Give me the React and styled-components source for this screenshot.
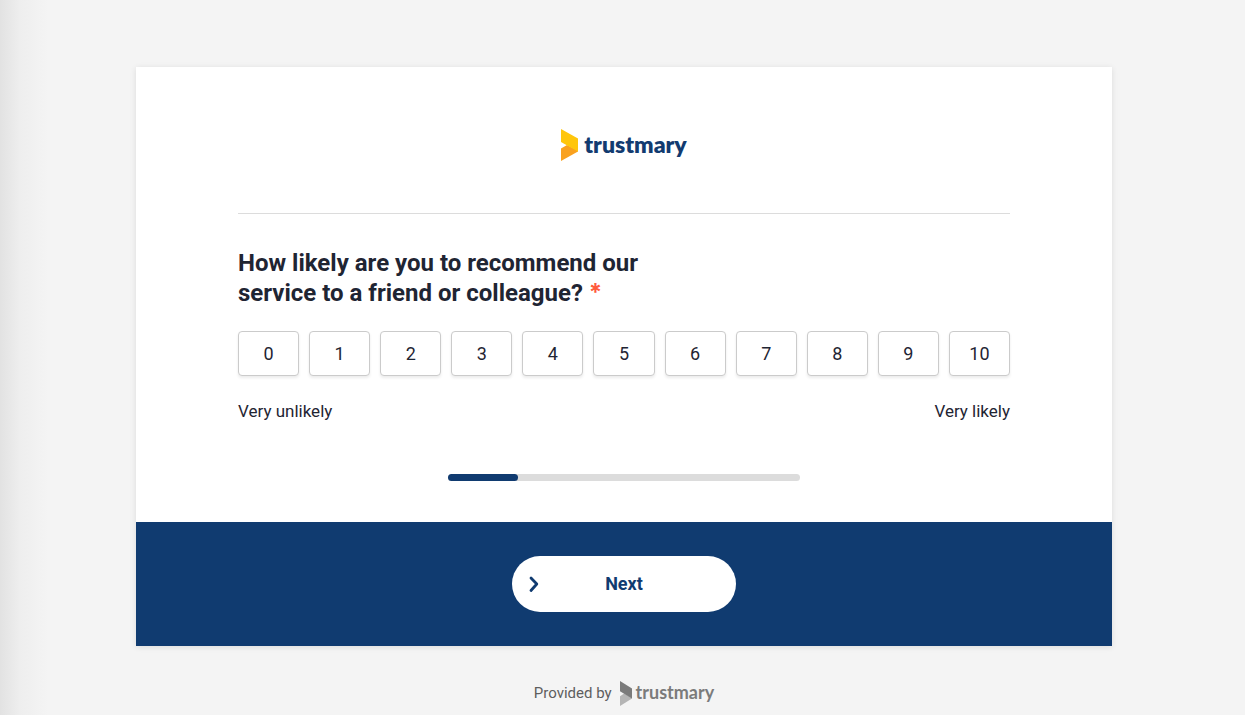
import React, { useState } from "react";
import styled, { createGlobalStyle } from "styled-components";

const GlobalStyle = createGlobalStyle`
  *, *::before, *::after { box-sizing: border-box; }
  body {
    margin: 0;
    background: #f4f4f4 linear-gradient(to right, #e2e2e2, #eeeeee 20px, #f4f4f4 48px);
    color: #1f2533;
    font-family: Roboto, "Liberation Sans", sans-serif;
  }
`;

const Page = styled.div`
  min-height: 100vh;
  padding: 67px 133px 0 136px;
`;

const Card = styled.form`
  background: #fff;
  box-shadow: 0 1px 6px rgba(0, 0, 0, 0.1);
`;

const Body = styled.div`
  padding: 60px 102px 41px;
`;

const LogoHeader = styled.header`
  display: flex;
  justify-content: center;
  padding-bottom: 50px;
  border-bottom: 1px solid #dcdcdc;
`;

const Brand = styled.span`
  display: inline-flex;
  align-items: center;
  gap: ${({ $small }) => ($small ? 4 : 6)}px;
  color: ${({ $small }) => ($small ? "#7b7b7b" : "#123b70")};
  font-family: Lato, sans-serif;
  font-size: ${({ $small }) => ($small ? 18 : 23)}px;
  font-weight: ${({ $small }) => ($small ? 700 : 800)};
  line-height: ${({ $small }) => ($small ? 26 : 34)}px;
`;

const BrandName = styled.span`
  padding-bottom: 2px;
`;

const Question = styled.fieldset`
  min-width: 0;
  margin: 0;
  padding: 34px 0 0;
  border: 0;
`;

const Title = styled.legend`
  float: left;
  width: 100%;
  max-width: 420px;
  margin-bottom: 23px;
  padding: 0;
  font-size: 24px;
  font-weight: 700;
  line-height: 30px;
`;

const Required = styled.span`
  color: #ff5a3d;
  font-family: Inter, sans-serif;
  line-height: 24px;
`;

const Scale = styled.div`
  clear: both;
  display: flex;
  gap: 10px;
`;

const Score = styled.label`
  flex: 1 1 0;
  display: flex;
  align-items: center;
  justify-content: center;
  height: 45px;
  border: 1px solid #cbcbcb;
  border-radius: 4px;
  background: #fff;
  box-shadow: 0 2px 3px rgba(0, 0, 0, 0.08);
  font-size: 18px;
  cursor: pointer;

  &:has(input:checked) {
    border-color: #103b70;
    background: #e8eef6;
  }

  &:focus-within {
    outline: 2px solid #103b70;
  }
`;

const ScoreInput = styled.input`
  appearance: none;
  width: 0;
  height: 0;
  margin: 0;
  outline: 0;
`;

const Ends = styled.div`
  display: flex;
  justify-content: space-between;
  margin-top: 22px;
  font-size: 17px;
  line-height: 26px;
`;

const Progress = styled.div`
  width: 100%;
  max-width: 352px;
  height: 7px;
  margin: 50px auto 0;
  border-radius: 4px;
  background: #dcdcdc;
`;

const ProgressFill = styled.div`
  height: 100%;
  border-radius: 4px;
  background: #103b70;
`;

const Actions = styled.footer`
  display: flex;
  justify-content: center;
  padding: 34px 0;
  background: #103b70;
`;

const NextButton = styled.button`
  display: grid;
  grid-template-columns: 20px 1fr 20px;
  align-items: center;
  width: 224px;
  height: 56px;
  padding: 0 12px;
  border: 0;
  border-radius: 28px;
  background: #fff;
  color: #103b70;
  font: 700 18px/24px Roboto, "Liberation Sans", sans-serif;
  cursor: pointer;
`;

const Provided = styled.div`
  display: flex;
  align-items: center;
  justify-content: center;
  gap: 8px;
  padding-top: 33px;
  color: #5e5e5e;
  font-size: 15px;
  line-height: 26px;
`;

function BrandMark({ width, height, top, bottom }) {
  return (
    <svg width={width} height={height} viewBox="0 0 17 32" preserveAspectRatio="none" aria-hidden="true">
      <path d="M6 16 L17 21.5 V22.5 L0 32 V19.5 Z" fill={bottom} />
      <path d="M0 0 L17 9.5 V22.5 L0 13 Z" fill={top} />
    </svg>
  );
}

function Chevron() {
  return (
    <svg width="20" height="20" viewBox="0 0 20 20" aria-hidden="true">
      <path d="M7 4 L12.8 10 L7 16.5" fill="none" stroke="currentColor" strokeWidth="2.8" strokeLinecap="round" strokeLinejoin="round" />
    </svg>
  );
}

const scores = [0, 1, 2, 3, 4, 5, 6, 7, 8, 9, 10];

export default function App() {
  const [score, setScore] = useState(null);
  const progress = 20;

  return (
    <>
      <GlobalStyle />
      <Page>
        <Card onSubmit={(event) => event.preventDefault()}>
          <Body>
            <LogoHeader>
              <Brand>
                <BrandMark width={17} height={32} top="#ffc60b" bottom="#f9a11f" />
                <BrandName>trustmary</BrandName>
              </Brand>
            </LogoHeader>
            <Question>
              <Title>
                How likely are you to recommend our service to a friend or colleague? <Required>*</Required>
              </Title>
              <Scale>
                {scores.map((value) => (
                  <Score key={value}>
                    <ScoreInput
                      type="radio"
                      name="score"
                      value={value}
                      checked={score === value}
                      onChange={() => setScore(value)}
                    />
                    {value}
                  </Score>
                ))}
              </Scale>
              <Ends>
                <span>Very unlikely</span>
                <span>Very likely</span>
              </Ends>
            </Question>
            <Progress role="progressbar" aria-label="Survey progress" aria-valuenow={progress} aria-valuemin={0} aria-valuemax={100}>
              <ProgressFill style={{ width: `${progress}%` }} />
            </Progress>
          </Body>
          <Actions>
            <NextButton type="submit">
              <Chevron />
              <span>Next</span>
            </NextButton>
          </Actions>
        </Card>
        <Provided>
          <span>Provided by</span>
          <Brand $small>
            <BrandMark width={12} height={25} top="#7b7b7b" bottom="#b5b5b5" />
            <BrandName>trustmary</BrandName>
          </Brand>
        </Provided>
      </Page>
    </>
  );
}
